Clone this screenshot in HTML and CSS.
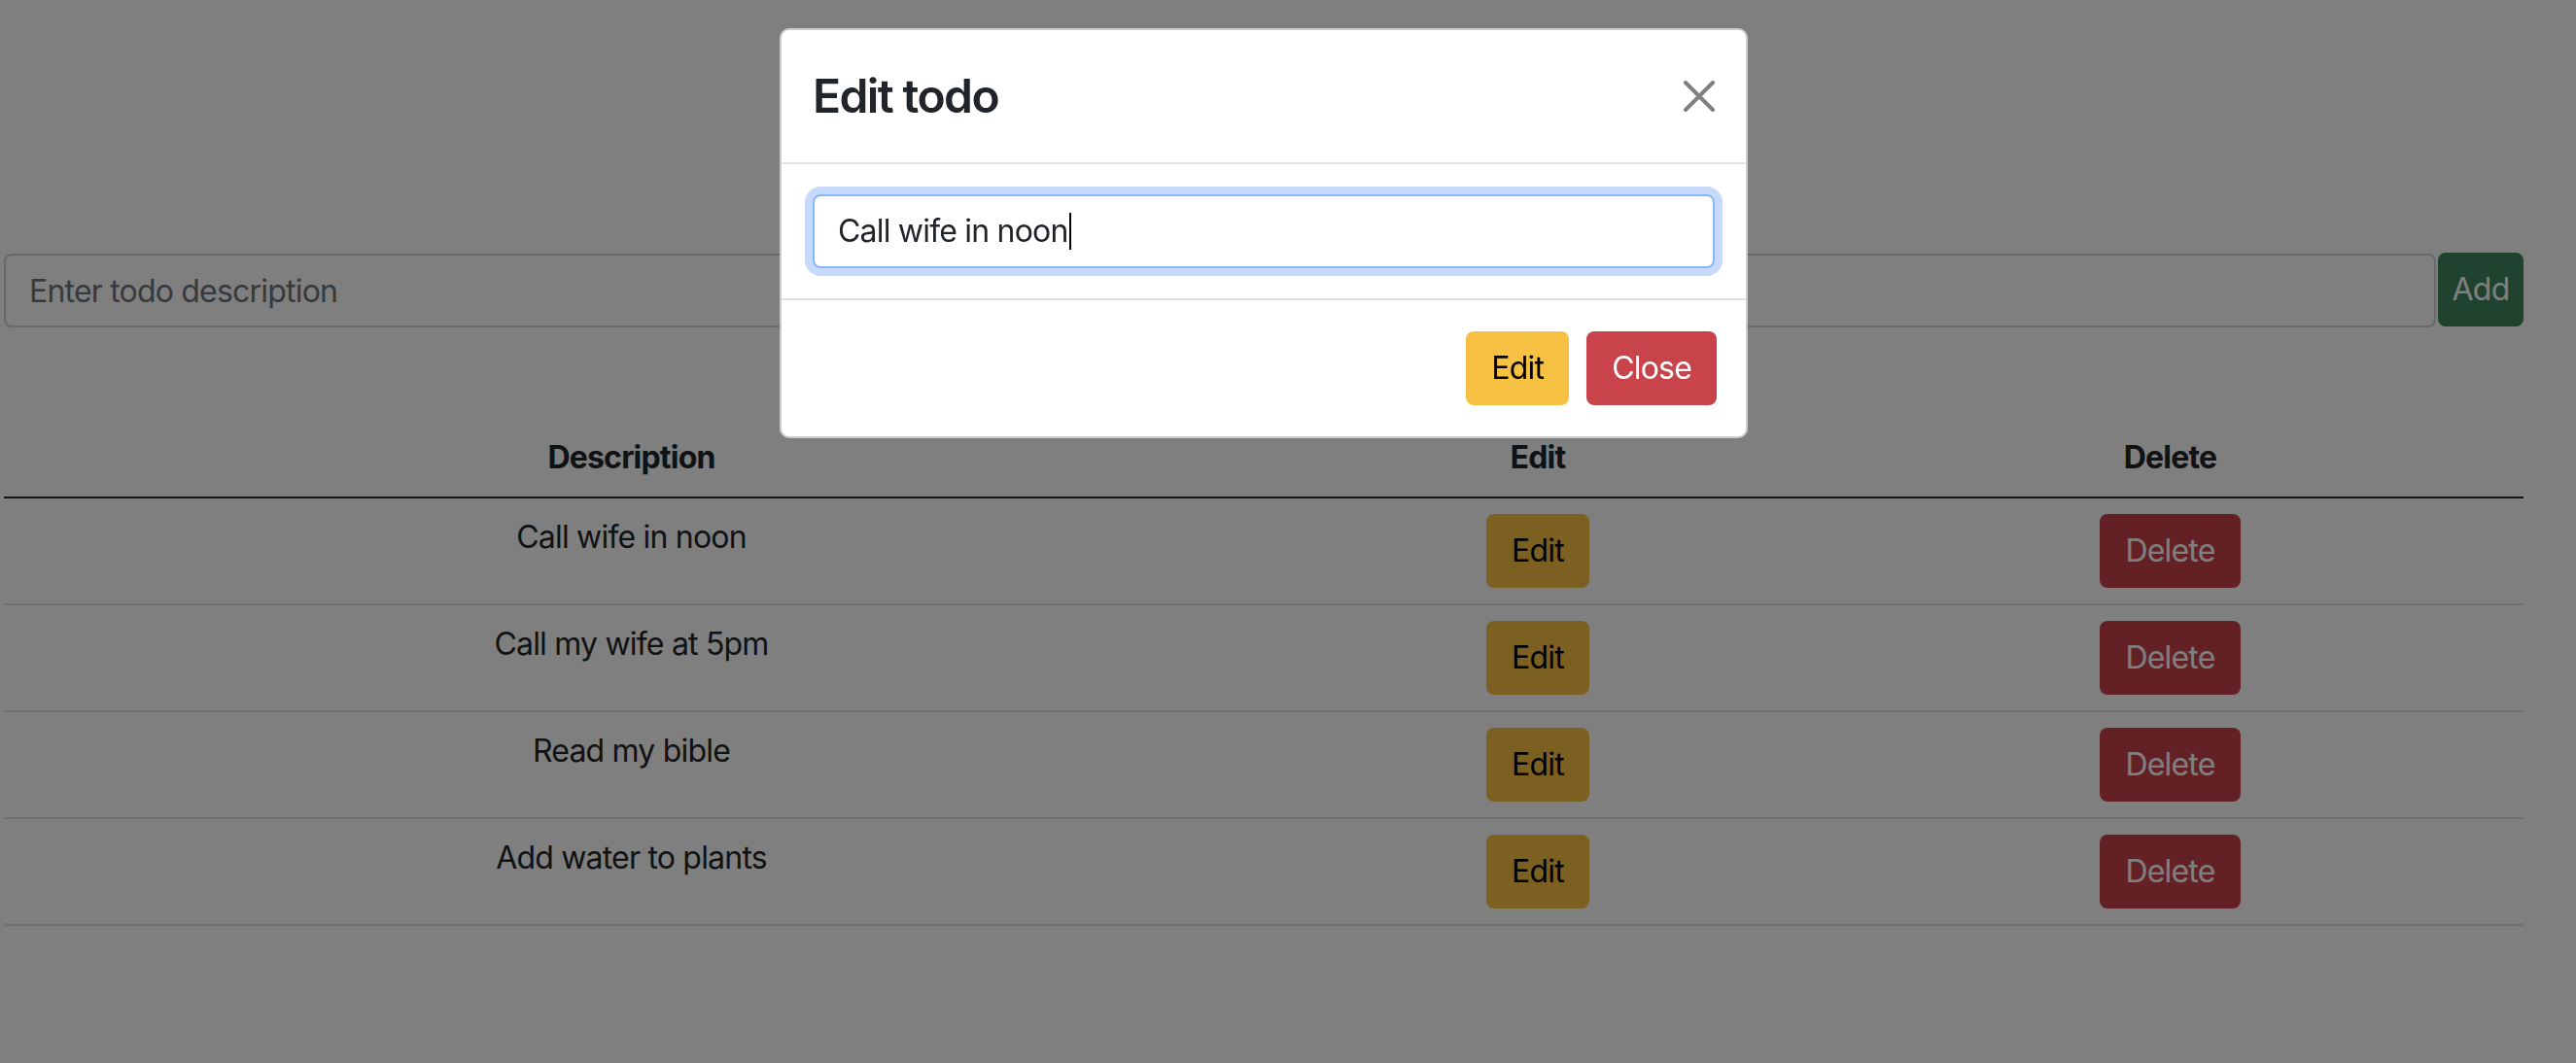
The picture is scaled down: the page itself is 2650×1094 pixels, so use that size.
FILE: index.html
```html
<!DOCTYPE html>
<html lang="en">
<head>
<meta charset="utf-8">
<title>Todo</title>
<link rel="stylesheet" href="styles.css">
</head>
<body>
<div class="page">
  <div class="add-row">
    <input class="form-control todo-input" type="text" placeholder="Enter todo description">
    <button class="btn btn-success add-btn">Add</button>
  </div>
  <table class="todo-table">
    <colgroup>
      <col class="col-desc">
      <col class="col-edit">
      <col class="col-delete">
    </colgroup>
    <thead>
      <tr><th>Description</th><th>Edit</th><th>Delete</th></tr>
    </thead>
    <tbody>
      <tr><td>Call wife in noon</td><td><button class="btn btn-warning">Edit</button></td><td><button class="btn btn-danger">Delete</button></td></tr>
      <tr><td>Call my wife at 5pm</td><td><button class="btn btn-warning">Edit</button></td><td><button class="btn btn-danger">Delete</button></td></tr>
      <tr><td>Read my bible</td><td><button class="btn btn-warning">Edit</button></td><td><button class="btn btn-danger">Delete</button></td></tr>
      <tr><td>Add water to plants</td><td><button class="btn btn-warning">Edit</button></td><td><button class="btn btn-danger">Delete</button></td></tr>
    </tbody>
  </table>
</div>

<div class="backdrop"></div>

<div class="modal">
  <div class="modal-header">
    <h4 class="modal-title">Edit todo</h4>
    <button class="btn-close" aria-label="Close">
      <svg viewBox="0 0 16 16" width="32" height="32"><path d="M1 1L15 15M15 1L1 15" stroke="currentColor" stroke-width="2" stroke-linecap="round" fill="none"/></svg>
    </button>
  </div>
  <div class="modal-body">
    <div class="form-control focused">Call wife in noon<span class="caret"></span></div>
  </div>
  <div class="modal-footer">
    <button class="btn btn-warning">Edit</button>
    <button class="btn btn-danger">Close</button>
  </div>
</div>
</body>
</html>
```

FILE: styles.css
```css
* { box-sizing: border-box; }

html, body {
  margin: 0;
  padding: 0;
  background: #ffffff;
}

body {
  font-family: Inter, "Liberation Sans", sans-serif;
  font-size: 32px;
  line-height: 48px;
  letter-spacing: -0.8px;
  color: #212529;
  overflow: hidden;
  height: 1094px;
}

.page {
  padding: 260px 0 0 4px;
  width: 2596px;
}

.add-row {
  display: flex;
  gap: 2px;
}

.form-control {
  display: block;
  font: inherit;
  letter-spacing: inherit;
  color: #212529;
  height: 76px;
  padding: 12px 24px;
  border: 2px solid #ced4da;
  border-radius: 8px;
  background: #fff;
}

.form-control::placeholder { color: #6c757d; }

.todo-input {
  flex: 1;
  margin-top: 1px;
}

.btn {
  font: inherit;
  letter-spacing: inherit;
  display: inline-block;
  padding: 12px 24px;
  border: 2px solid transparent;
  border-radius: 8px;
  line-height: 48px;
  height: 76px;
  cursor: pointer;
}

.btn-success { background: #3e865c; color: #fff; }
.btn-warning { background: #f6c143; color: #000; }
.btn-danger { background: #c9434a; color: #fff; }

.add-btn {
  width: 88px;
  padding: 12px 0;
  text-align: center;
}

.todo-table {
  margin-top: 94px;
  width: 2592px;
  border-collapse: collapse;
  table-layout: fixed;
}

.col-desc { width: 1291px; }
.col-edit { width: 574px; }
.col-delete { width: 727px; }

.todo-table th,
.todo-table td {
  text-align: center;
  vertical-align: top;
  padding: 16px;
}

.todo-table th {
  font-weight: 700;
  border-bottom: 2px solid #212529;
}

.todo-table td {
  border-bottom: 2px solid #dee2e6;
}

.backdrop {
  position: fixed;
  inset: 0;
  background: rgba(0, 0, 0, 0.5);
}

.modal {
  position: fixed;
  left: 802px;
  top: 29px;
  width: 996px;
  background: #fff;
  border: 2px solid rgba(0, 0, 0, 0.2);
  border-radius: 10px;
}

.modal-header {
  display: flex;
  align-items: center;
  justify-content: space-between;
  padding: 32px;
  border-bottom: 2px solid #dee2e6;
}

.modal-title {
  margin: 0;
  font-size: 48px;
  line-height: 72px;
  font-weight: 600;
  letter-spacing: -1.6px;
}

.btn-close {
  display: flex;
  padding: 0;
  margin: 0 0 0 0;
  border: 0;
  background: none;
  color: #808080;
}

.modal-body {
  padding: 31px 32px 31px;
}

.focused {
  border-color: #86b7fe;
  box-shadow: 0 0 0 8px #c8dafb;
  white-space: nowrap;
}

.caret {
  display: inline-block;
  width: 2px;
  height: 38px;
  margin-left: 1px;
  vertical-align: -8px;
  background: #000;
}

.modal-footer {
  display: flex;
  justify-content: flex-end;
  gap: 18px;
  padding: 32px 30px 32px;
  border-top: 2px solid #dee2e6;
}
```
